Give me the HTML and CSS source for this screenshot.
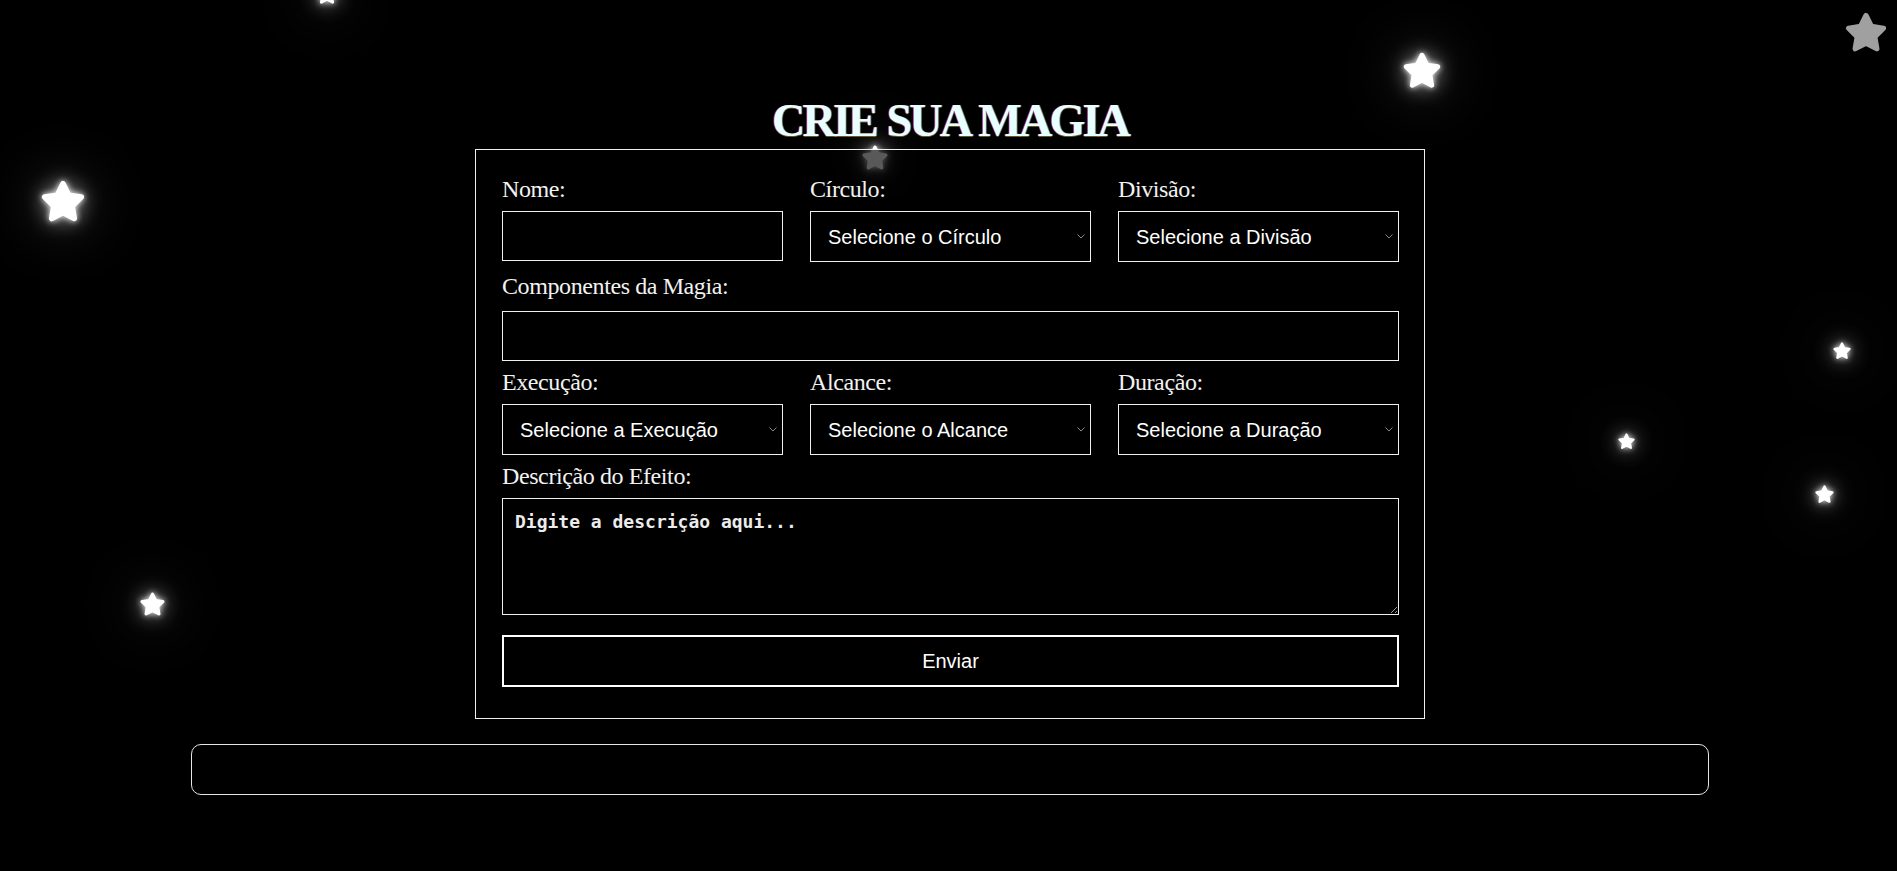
FILE: index.html
```html
<!DOCTYPE html>
<html lang="pt-BR">
<head>
<meta charset="utf-8">
<title>Crie sua Magia</title>
<link rel="stylesheet" href="styles.css">
</head>
<body>
<div class="sky">
  <svg class="star glow s-a" viewBox="0 0 24 24"><polygon points="12,2 15.09,8.26 22,9.27 17,14.14 18.18,21.02 12,17.77 5.82,21.02 7,14.14 2,9.27 8.91,8.26"/></svg>
  <svg class="star glow s-b" viewBox="0 0 24 24"><polygon points="12,2 15.09,8.26 22,9.27 17,14.14 18.18,21.02 12,17.77 5.82,21.02 7,14.14 2,9.27 8.91,8.26"/></svg>
  <svg class="star glow s-c" viewBox="0 0 24 24"><polygon points="12,2 15.09,8.26 22,9.27 17,14.14 18.18,21.02 12,17.77 5.82,21.02 7,14.14 2,9.27 8.91,8.26"/></svg>
  <svg class="star dim s-d" viewBox="0 0 24 24"><polygon points="12,2 15.09,8.26 22,9.27 17,14.14 18.18,21.02 12,17.77 5.82,21.02 7,14.14 2,9.27 8.91,8.26"/></svg>
  <svg class="star glow s-e" viewBox="0 0 24 24"><polygon points="12,2 15.09,8.26 22,9.27 17,14.14 18.18,21.02 12,17.77 5.82,21.02 7,14.14 2,9.27 8.91,8.26"/></svg>
  <svg class="star glow s-f" viewBox="0 0 24 24"><polygon points="12,2 15.09,8.26 22,9.27 17,14.14 18.18,21.02 12,17.77 5.82,21.02 7,14.14 2,9.27 8.91,8.26"/></svg>
  <svg class="star glow s-g" viewBox="0 0 24 24"><polygon points="12,2 15.09,8.26 22,9.27 17,14.14 18.18,21.02 12,17.77 5.82,21.02 7,14.14 2,9.27 8.91,8.26"/></svg>
  <svg class="star glow s-h" viewBox="0 0 24 24"><polygon points="12,2 15.09,8.26 22,9.27 17,14.14 18.18,21.02 12,17.77 5.82,21.02 7,14.14 2,9.27 8.91,8.26"/></svg>
  <svg class="star glow s-i" viewBox="0 0 24 24"><polygon points="12,2 15.09,8.26 22,9.27 17,14.14 18.18,21.02 12,17.77 5.82,21.02 7,14.14 2,9.27 8.91,8.26"/></svg>
</div>

<main class="page">
  <h1 class="title">CRIE SUA MAGIA</h1>

  <form class="spell-form">
    <div class="row three">
      <div class="field">
        <label class="label" for="nome">Nome:</label>
        <input class="control" id="nome" type="text">
      </div>
      <div class="field">
        <label class="label" for="circulo">Círculo:</label>
        <select class="control select" id="circulo">
          <option>Selecione o Círculo</option>
        </select>
      </div>
      <div class="field">
        <label class="label" for="divisao">Divisão:</label>
        <select class="control select" id="divisao">
          <option>Selecione a Divisão</option>
        </select>
      </div>
    </div>

    <div class="row row-components">
      <div class="field">
        <label class="label" for="componentes">Componentes da Magia:</label>
        <input class="control" id="componentes" type="text">
      </div>
    </div>

    <div class="row three row-casting">
      <div class="field">
        <label class="label" for="execucao">Execução:</label>
        <select class="control select" id="execucao">
          <option>Selecione a Execução</option>
        </select>
      </div>
      <div class="field">
        <label class="label" for="alcance">Alcance:</label>
        <select class="control select" id="alcance">
          <option>Selecione o Alcance</option>
        </select>
      </div>
      <div class="field">
        <label class="label" for="duracao">Duração:</label>
        <select class="control select" id="duracao">
          <option>Selecione a Duração</option>
        </select>
      </div>
    </div>

    <div class="row row-description">
      <div class="field">
        <label class="label" for="descricao">Descrição do Efeito:</label>
        <textarea class="control area" id="descricao" placeholder="Digite a descrição aqui..."></textarea>
      </div>
    </div>

    <button class="submit" type="button">Enviar</button>
  </form>

  <section class="result"></section>
</main>
</body>
</html>
```

FILE: styles.css
```css
* {
  box-sizing: border-box;
}

html, body {
  margin: 0;
  background: #000;
}

body {
  min-height: 871px;
  overflow: hidden;
  position: relative;
  font-family: "Liberation Serif", serif;
  color: #fff;
}

/* decorative stars */
.sky {
  position: absolute;
  inset: 0;
  z-index: 0;
  pointer-events: none;
}

.star {
  position: absolute;
  overflow: visible;
}

.star polygon {
  stroke-linejoin: round;
  stroke-width: 3;
}

.glow polygon {
  fill: #fff;
  stroke: #fff;
}

.glow {
  filter: drop-shadow(0 0 3px #fff) drop-shadow(0 0 10px rgba(255,255,255,0.55)) drop-shadow(0 0 28px rgba(255,255,255,0.25));
}

.dim polygon {
  fill: #a0a0a0;
  stroke: #a0a0a0;
}

.s-a { left: 316px; top: -17px; width: 22px; height: 22px; }
.s-b { left: 41px; top: 180px; width: 44px; height: 44px; }
.s-c { left: 1403px; top: 52px; width: 38px; height: 38px; }
.s-d { left: 1845px; top: 12px; width: 42px; height: 42px; }
.s-e { left: 862px; top: 145px; width: 26px; height: 26px; }
.s-f { left: 140px; top: 592px; width: 25px; height: 25px; }
.s-g { left: 1833px; top: 342px; width: 18px; height: 18px; }
.s-h { left: 1618px; top: 433px; width: 17px; height: 17px; }
.s-i { left: 1815px; top: 485px; width: 19px; height: 19px; }

/* page */
.page {
  position: relative;
  z-index: 1;
  padding: 97px 188px 60px 191px;
}

.title {
  margin: 0 0 4px;
  text-align: center;
  font-family: "Liberation Serif", serif;
  font-weight: 700;
  font-size: 46px;
  line-height: 48px;
  letter-spacing: -2.8px;
  word-spacing: 2px;
  color: #e8ffff;
  text-shadow: -1px 0 rgba(255, 40, 40, 0.75), 1px 0 rgba(40, 160, 255, 0.75), 0 1px rgba(230, 200, 60, 0.45);
}

.spell-form {
  width: 950px;
  margin: 0 auto;
  border: 1px solid #f0f0f0;
  background: rgba(0, 0, 0, 0.65);
  padding: 25px 25px 31px 26px;
  display: flex;
  flex-direction: column;
}

.row {
  display: grid;
  grid-template-columns: 1fr;
}

.row.three {
  grid-template-columns: repeat(3, 1fr);
  column-gap: 27px;
}

.row-components {
  margin-top: 10px;
}

.row-components .label {
  margin-bottom: 11px;
}

.row-casting {
  margin-top: 7px;
}

.row-description {
  margin-top: 7px;
}

.field {
  display: flex;
  flex-direction: column;
}

.label {
  display: block;
  height: 28px;
  margin-bottom: 8px;
  font-size: 24px;
  line-height: 28px;
  letter-spacing: -0.4px;
  color: #f2f2f2;
}

.control {
  height: 50px;
  width: 100%;
  background: #000;
  color: #fff;
  border: 1px solid #f0f0f0;
  border-radius: 0;
  font-family: "Liberation Sans", Arial, sans-serif;
  font-size: 20px;
  outline: none;
}

.select {
  -webkit-appearance: none;
  appearance: none;
  padding: 0 24px 0 17px;
  height: 51px;
  background-color: #000;
  background-image: url("data:image/svg+xml,%3Csvg xmlns='http://www.w3.org/2000/svg' width='8' height='5' viewBox='0 0 8 5'%3E%3Cpath d='M0.5 0.5 L4 4 L7.5 0.5' fill='none' stroke='%23888' stroke-width='1'/%3E%3C/svg%3E");
  background-repeat: no-repeat;
  background-position: right 5px center;
  background-size: 8px 5px;
}

.area {
  height: 117px;
  padding: 12px 12px;
  resize: vertical;
  font-family: "DejaVu Sans Mono", monospace;
  font-weight: 700;
  font-size: 18px;
  line-height: 22px;
}

.area::placeholder {
  color: #ececec;
  opacity: 1;
}

.submit {
  margin-top: 20px;
  height: 52px;
  width: 100%;
  background: #000;
  color: #fff;
  border: 2px solid #fff;
  font-family: "Liberation Sans", Arial, sans-serif;
  font-size: 20px;
  cursor: pointer;
}

.result {
  margin-top: 25px;
  height: 51px;
  border: 1px solid #e6e6e6;
  border-radius: 10px;
  background: #000;
}
```
